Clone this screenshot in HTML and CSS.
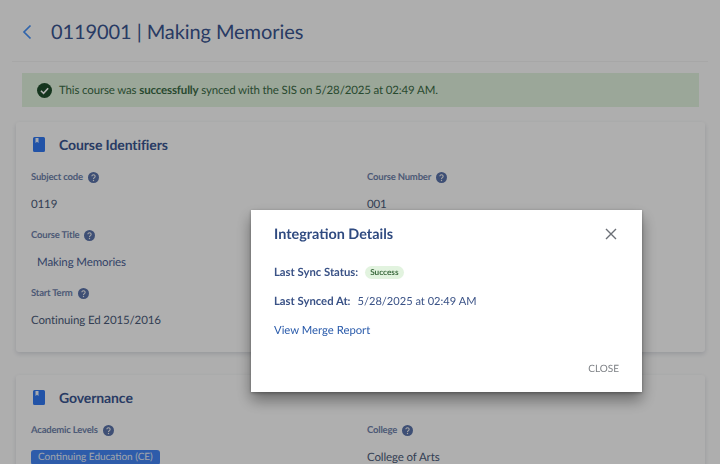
FILE: index.html
```html
<!DOCTYPE html>
<html lang="en">
<head>
<meta charset="utf-8">
<title>0119001 | Making Memories</title>
<link rel="stylesheet" href="styles.css">
</head>
<body>
<main class="page">
  <header class="page-header">
    <svg class="back-icon" viewBox="0 0 10 16" width="10" height="16"><path d="M8.500 1.500 2 8l6.500 6.500" fill="none" stroke="#4590f5" stroke-width="1.700"/></svg>
    <h1 class="page-title">0119001 | Making Memories</h1>
  </header>
  <div class="alert">
    <svg class="alert-icon" viewBox="0 0 16 16" width="15" height="15"><circle cx="8" cy="8" r="8" fill="#1f4d2b"/><path d="M4.200 8.300 7 11l4.900-5.400" fill="none" stroke="#fff" stroke-width="1.700"/></svg>
    <p class="alert-text">This course was <b>successfully</b> synced with the SIS on 5/28/2025 at 02:49 AM.</p>
  </div>
  <section class="card">
    <h2 class="card-title">
      <svg class="book-icon" viewBox="0 0 12 15" width="12" height="15"><path d="M1.500 0h9A1.500 1.500 0 0 1 12 1.500v12a1.500 1.500 0 0 1-1.500 1.500h-9A1.500 1.500 0 0 1 0 13.500v-12A1.500 1.500 0 0 1 1.500 0z" fill="#3278f0"/><path d="M2.500 1h3v5L4 4.800 2.500 6z" fill="#eef3fb"/></svg>
      Course Identifiers
    </h2>
    <div class="fields">
      <div class="field">
        <div class="label">Subject code <svg class="help" viewBox="0 0 16 16"><use href="#help"/></svg></div>
        <div class="value">0119</div>
      </div>
      <div class="field">
        <div class="label">Course Number <svg class="help" viewBox="0 0 16 16"><use href="#help"/></svg></div>
        <div class="value">001</div>
      </div>
      <div class="field">
        <div class="label">Course Title <svg class="help" viewBox="0 0 16 16"><use href="#help"/></svg></div>
        <div class="value value-inset">Making Memories</div>
      </div>
      <div class="field"></div>
      <div class="field">
        <div class="label">Start Term <svg class="help" viewBox="0 0 16 16"><use href="#help"/></svg></div>
        <div class="value">Continuing Ed 2015/2016</div>
      </div>
    </div>
  </section>
  <section class="card">
    <h2 class="card-title">
      <svg class="book-icon" viewBox="0 0 12 15" width="12" height="15"><path d="M1.500 0h9A1.500 1.500 0 0 1 12 1.500v12a1.500 1.500 0 0 1-1.500 1.500h-9A1.500 1.500 0 0 1 0 13.500v-12A1.500 1.500 0 0 1 1.500 0z" fill="#3278f0"/><path d="M2.500 1h3v5L4 4.800 2.500 6z" fill="#eef3fb"/></svg>
      Governance
    </h2>
    <div class="fields">
      <div class="field">
        <div class="label">Academic Levels <svg class="help" viewBox="0 0 16 16"><use href="#help"/></svg></div>
        <div class="value"><span class="chip">Continuing Education (CE)</span></div>
      </div>
      <div class="field">
        <div class="label">College <svg class="help" viewBox="0 0 16 16"><use href="#help"/></svg></div>
        <div class="value">College of Arts</div>
      </div>
    </div>
  </section>
</main>
<svg class="defs" width="0" height="0"><symbol id="help" viewBox="0 0 16 16"><circle cx="8" cy="8" r="8" fill="#5a72a8"/><path d="M5.600 6.200a2.400 2.300 0 1 1 3.700 2c-.9.600-1.300 1-1.300 2" fill="none" stroke="#eee" stroke-width="1.600"/><circle cx="8" cy="12.400" r="1" fill="#eee"/></symbol></svg>
<div class="scrim">
  <div class="modal" role="dialog">
    <div class="modal-head">
      <h3 class="modal-title">Integration Details</h3>
      <svg class="close-icon" viewBox="0 0 12 12" width="12" height="12"><path d="M1 1l10 10M11 1 1 11" stroke="#6b6f76" stroke-width="1.400" fill="none"/></svg>
    </div>
    <div class="modal-row"><b>Last Sync Status:</b><span class="badge">Success</span></div>
    <div class="modal-row"><b>Last Synced At:</b><span>5/28/2025 at 02:49 AM</span></div>
    <a class="modal-link" href="#">View Merge Report</a>
    <div class="modal-foot"><span class="close-btn">CLOSE</span></div>
  </div>
</div>
</body>
</html>
```
FILE: styles.css
```css
* { box-sizing: border-box; }
html, body { margin: 0; height: 100%; overflow: hidden; }
body { font-family: Lato, "Open Sans", sans-serif; background: #fafafa; color: #2f4a7d; text-rendering: geometricPrecision; }
.defs { position: absolute; }
.page { height: 464px; overflow: hidden; }
.page-header { height: 62px; margin: 0 12px; padding: 2px 0 0 10px; display: flex; align-items: center; border-bottom: 1px solid #f0f0f0; }
.back-icon { margin-right: 19px; }
.page-title { margin: 0; font-size: 20px; letter-spacing: -0.08px; font-weight: 400; color: #3a5590; line-height: 1; }
.alert { margin: 11px 21px 15px 22px; height: 34px; padding-left: 15px; display: flex; align-items: center; gap: 7px; background: #dff0dc; }
.alert-text { margin: 0; font-size: 11.500px; letter-spacing: -0.15px; color: #3a6a45; }
.alert-text b { font-weight: 700; }
.card { margin: 0 15px 23px 16px; padding: 13px 15px 0; height: 230px; background: #fbfbfb; border-radius: 3px; box-shadow: 0 2px 5px rgba(60,70,100,.18); }
.card-title { margin: 0; height: 18px; display: flex; align-items: center; gap: 14px; padding-left: 2px; font-size: 14px; letter-spacing: -0.1px; font-weight: 700; color: #3a5590; }
.fields { margin-top: 15px; display: grid; grid-template-columns: 336px 1fr; grid-auto-rows: 58px; }
.label { height: 18px; display: flex; align-items: center; gap: 5px; font-size: 9.500px; letter-spacing: -0.2px; font-weight: 700; color: #6f82aa; }
.help { width: 11px; height: 11px; }
.value { margin-top: 10px; font-size: 11.500px; letter-spacing: -0.12px; line-height: 18px; color: #4a5a78; }
.value-inset { padding-left: 6px; color: #4a6094; }
.chip { display: inline-block; margin-top: 1px; padding: 0 7px; height: 15px; line-height: 15px; border-radius: 3px; font-size: 10px; letter-spacing: 0; background: #4285f4; color: #e8edf5; vertical-align: top; }
.scrim { position: fixed; inset: 0; background: rgba(0,0,0,.3); }
.modal { position: absolute; left: 251px; top: 210px; width: 391px; height: 182px; padding: 0 23px; background: #fff; box-shadow: 0 8px 14px rgba(0,0,0,.4), 0 1px 3px rgba(0,0,0,.3); display: flex; flex-direction: column; }
.modal-head { height: 48px; display: flex; align-items: center; justify-content: space-between; }
.modal-title { margin: 0; font-size: 14.400px; font-weight: 700; color: #2f4a80; }
.close-icon { margin-right: 2px; }
.modal-row { margin-top: 3px; height: 23px; display: flex; align-items: center; gap: 7px; font-size: 11.300px; color: #3a5286; }
.modal-row + .modal-row { margin-top: 6px; }
.modal-row b { font-weight: 700; }
.modal-row span:not(.badge) { font-size: 11.100px; }
.badge { height: 13px; line-height: 13px; padding: 0 5px; border-radius: 7px; background: #e2f3df; color: #3d6b3f; font-size: 8.200px; font-weight: 700; }
.modal-link { margin-top: 6px; height: 23px; line-height: 23px; font-size: 11.300px; color: #2a5bab; text-decoration: none; }
.modal-foot { margin-top: 21px; display: flex; justify-content: flex-end; }
.close-btn { font-size: 10px; color: #7d8085; }
```
